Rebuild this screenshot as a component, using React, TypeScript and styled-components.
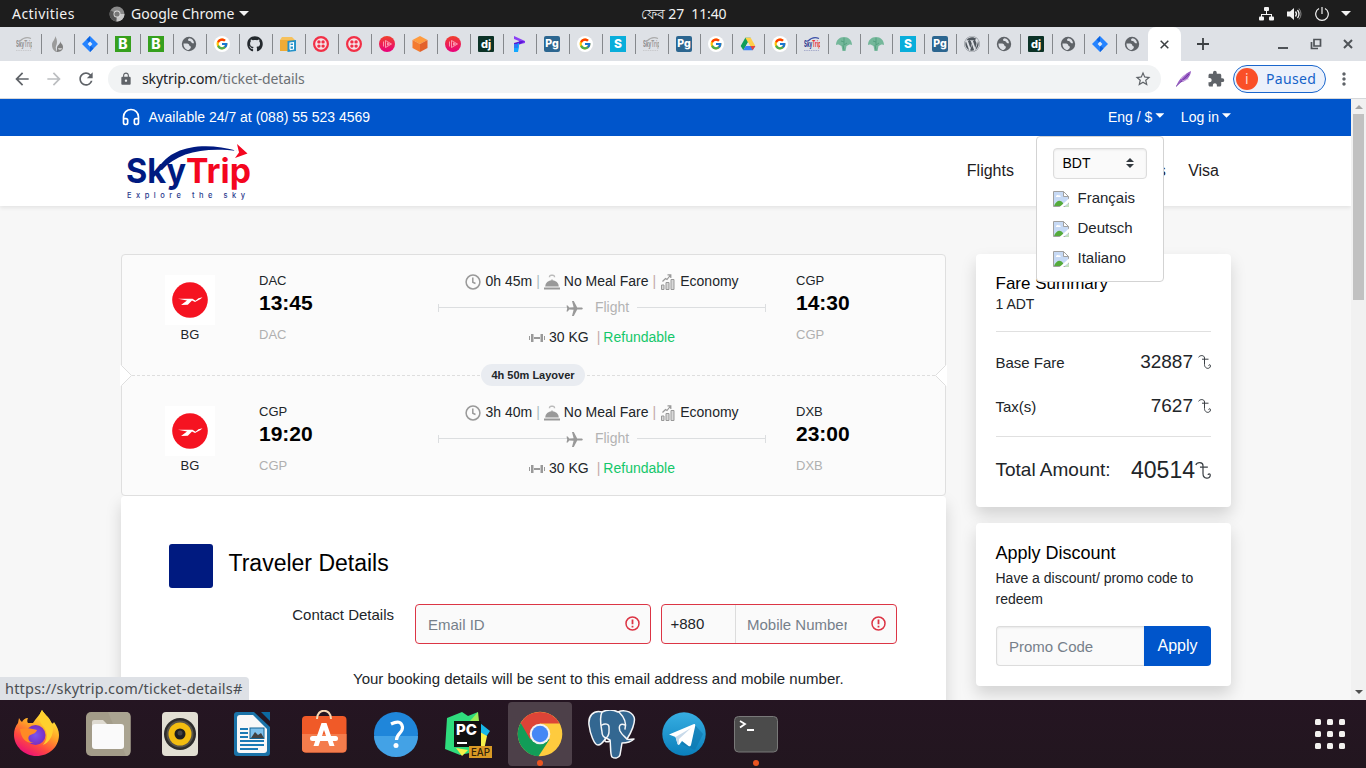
import React from 'react';
import styled, { createGlobalStyle, css } from 'styled-components';
import { Headphones } from 'lucide-react';
import { FcGoogle } from 'react-icons/fc';
import { FaGithub, FaWordpress } from 'react-icons/fa';
import {
  MdArrowBack, MdArrowForward, MdRefresh, MdLock, MdStarBorder, MdExtension, MdMoreVert,
} from 'react-icons/md';

const GlobalStyle = createGlobalStyle`
  * { box-sizing: border-box; }
  html, body { margin: 0; padding: 0; }
  body { width: 1366px; height: 768px; overflow: hidden; font-family: "Liberation Sans", Arial, sans-serif; color: #212529; }
  svg { display: block; flex: none; }
  text { font-family: Inter, "Noto Sans", sans-serif; }
  input { font-family: "Liberation Sans", Arial, sans-serif; }
`;

const ui = css`font-family: "Noto Sans", "Open Sans", sans-serif;`;

/* ---------- desktop ---------- */

const Desktop = styled.div`
  display: flex;
  flex-direction: column;
  width: 1366px;
  height: 768px;
  overflow: hidden;
  background: #231620;
`;

const TopBar = styled.header`
  ${ui}
  position: relative;
  flex: none;
  display: flex;
  align-items: center;
  height: 27px;
  padding: 0 15px 0 12px;
  background: #1d1d1d;
  color: #f2f2f2;
  font-size: 14px;
`;
const Activities = styled.span`width: 97px; font-size: 14px; letter-spacing: 0.45px;`;
const AppName = styled.span`margin-left: 6px;`;
const Clock = styled.span`
  position: absolute;
  left: 641px;
  top: 0;
  line-height: 27px;
  white-space: pre;
  font-size: 14px;
  letter-spacing: -0.1px;
`;
const Tray = styled.div`margin-left: auto; display: flex; align-items: center; gap: 12px;`;
const TinyCaret = styled.i<{ $gap?: number }>`
  margin-left: ${p => p.$gap ?? 0}px;
  border: 5px solid transparent;
  border-top-color: #f2f2f2;
  border-bottom: 0;
`;

/* ---------- browser ---------- */

const TabStrip = styled.div`
  flex: none;
  display: flex;
  height: 34px;
  padding-left: 9px;
  background: #dee1e6;
`;
const Tab = styled.div<{ $w: number; $last?: boolean }>`
  display: flex;
  align-items: center;
  width: ${p => p.$w}px;
  height: 20px;
  margin-top: 7px;
  padding-left: 7px;
  border-right: ${p => (p.$last ? 0 : 1)}px solid #85888c;
`;
const ActiveTab = styled.div`
  display: flex;
  align-items: center;
  justify-content: center;
  width: 33px;
  margin-left: -1px;
  background: #fff;
  border-radius: 8px 8px 0 0;
`;
const StripTools = styled.div`
  flex: 1;
  display: flex;
  align-items: center;
  padding: 0 13px 0 16px;
  gap: 20px;
`;
const WindowButtons = styled.div`display: flex; align-items: center; gap: 21px; margin-left: auto;`;
const Spacer = styled.div`flex: 1;`;

const Toolbar = styled.div`
  ${ui}
  flex: none;
  display: flex;
  align-items: center;
  height: 38px;
  padding: 0 12px 2px 12px;
  background: #fff;
  border-bottom: 1px solid #d5d7da;
  color: #5f6368;
`;
const NavButtons = styled.div`display: flex; gap: 12px; width: 96px;`;
const AddressBar = styled.div`
  display: flex;
  align-items: center;
  width: 1053px;
  height: 28px;
  padding: 0 9px 0 11px;
  border-radius: 14px;
  background: #f1f3f4;
`;
const Url = styled.span`
  flex: 1;
  margin-left: 9px;
  font-size: 14px;
  letter-spacing: -0.1px;
  color: #6c7074;
  b { font-weight: 400; color: #202124; }
`;
const Extensions = styled.div`display: flex; align-items: center; gap: 15px; margin-left: 15px;`;
const ProfileChip = styled.div`
  display: flex;
  align-items: center;
  gap: 8px;
  width: 93px;
  height: 28px;
  margin-left: 8px;
  padding-left: 2px;
  border: 1px solid #1a66cc;
  border-radius: 14px;
  background: #ecf1fb;
  color: #1462c9;
  font-size: 14px;
  letter-spacing: 0.35px;
`;
const Avatar = styled.span`
  width: 22px;
  height: 22px;
  border-radius: 50%;
  background: #fa4f28;
  color: #ffd9cf;
  text-align: center;
  line-height: 21px;
  font-size: 14px;
`;

const Viewport = styled.div`
  position: relative;
  flex: none;
  display: flex;
  height: 601px;
  overflow: hidden;
`;
const Page = styled.div`
  position: relative;
  width: 1351px;
  height: 601px;
  overflow: hidden;
  background: #f7f7f7;
`;
const ScrollTrack = styled.div`
  display: flex;
  flex-direction: column;
  align-items: center;
  justify-content: space-between;
  width: 15px;
  background: #f1f1f1;
`;
const ScrollUp = styled.div`padding-top: 6px;`;
const ScrollDown = styled.div`padding-bottom: 6px;`;
const ScrollThumb = styled.div`width: 11px; height: 186px; background: #c1c1c1; margin: 4px 0 auto;`;
const StatusBubble = styled.div`
  ${ui}
  position: absolute;
  left: 0;
  bottom: 0;
  width: 249px;
  height: 23px;
  padding-left: 5px;
  line-height: 22px;
  border-radius: 0 4px 0 0;
  background: #dee1e6;
  color: #4a4d51;
  font-size: 14.5px;
  letter-spacing: 0.2px;
`;

/* ---------- site header ---------- */

const Container = styled.div`width: 1110px; margin: 0 auto 0 121px; display: flex;`;
const ContactBar = styled.div`
  background: #0055cb;
  color: #fff;
  font-size: 14px;
  ${Container} { height: 37px; align-items: center; padding-bottom: 1px; }
`;
const Phone = styled.span`margin-left: 7.5px; flex: 1;`;
const Toggle = styled.span`
  display: flex;
  align-items: center;
  margin-left: 16.5px;
  &::after {
    content: "";
    width: 9px;
    height: 4.5px;
    margin: -3px 0 0 3px;
    background: #fff;
    clip-path: polygon(0 0, 100% 0, 50% 100%);
  }
`;
const SiteHeader = styled.div`
  position: relative;
  background: #fff;
  box-shadow: 0 2px 4px rgba(0, 0, 0, 0.08);
  ${Container} { height: 70px; align-items: center; justify-content: space-between; }
`;
const LogoWrap = styled.div`padding: 2px 0 0 5px;`;
const SiteNav = styled.nav`
  display: flex;
  gap: 22.5px;
  padding: 0 12px 1px 0;
  font-size: 16px;
  color: #1e2022;
`;

const LocaleMenu = styled.div`
  position: absolute;
  z-index: 2;
  left: 1036px;
  top: 37px;
  width: 128px;
  height: 146px;
  padding: 11px 16px;
  border: 1px solid #d3d3d3;
  border-radius: 4px;
  background: #fff;
`;
const CurrencySelect = styled.div`
  display: flex;
  align-items: center;
  justify-content: space-between;
  width: 94px;
  height: 31px;
  margin-bottom: 4px;
  padding: 0 12px 1px 8.5px;
  border: 1px solid #dcdcdc;
  border-radius: 4px;
  background: #fafafa;
  box-shadow: inset 0 1px 2px rgba(0, 0, 0, 0.075);
  font-size: 14px;
  color: #000;
`;
const Language = styled.div`
  display: flex;
  align-items: center;
  gap: 8.5px;
  height: 30px;
  padding-bottom: 1px;
  font-size: 15px;
  svg { margin-top: 2px; }
`;

/* ---------- content ---------- */

const Content = styled(Container)`padding-top: 48px; gap: 30px; align-items: flex-start;`;
const MainColumn = styled.div`width: 825px;`;
const SideColumn = styled.div`width: 255px; display: flex; flex-direction: column; gap: 16px;`;

const Itinerary = styled.section`
  position: relative;
  height: 242px;
  border: 1px solid #dfdfdf;
  border-radius: 4px;
  background: #fbfbfb;
`;
const Segment = styled.div<{ $second?: boolean }>`
  display: grid;
  grid-template-columns: 50px 223px 328px 1fr;
  height: 120px;
  padding: ${p => (p.$second ? 30 : 20)}px 0 0 43px;
`;
const Carrier = styled.div`font-size: 13px; text-align: center; line-height: 19px;`;
const Stop = styled.div<{ $pad: number }>`
  padding: 0 0 0 ${p => p.$pad}px;
  margin-top: -4px;
  font-size: 13px;
  line-height: 20px;
`;
const Time = styled.div`font-size: 21px; font-weight: 700; color: #000; line-height: 24px;`;
const Faded = styled.div`color: #b0b0b0; margin-top: 10px;`;
const Info = styled.div`display: flex; flex-direction: column; font-size: 14px; margin-top: -4px;`;
const InfoRow = styled.div<{ $h: number }>`
  display: flex;
  align-items: center;
  justify-content: center;
  height: ${p => p.$h}px;
  gap: 4px;
  svg { margin-top: 1px; }
`;
const Pipe = styled.span<{ $l?: number; $warm?: boolean }>`
  margin-left: ${p => p.$l ?? 0}px;
  color: ${p => (p.$warm ? '#c4a9a9' : '#a9bcc0')};
`;
const Good = styled.span`color: #14c76a; margin-left: -1px;`;
const Rail = styled.div`flex: 1; display: flex; align-items: center; height: 9px; margin-top: 1px;`;
const RailLine = styled.i`flex: 1; height: 1px; background: #dcdee0;`;
const RailEnd = styled.i`width: 1px; height: 8px; background: #dcdee0;`;
const RailLabel = styled.span`color: #b3b3b3; padding: 0 4px 0 8px;`;

const LayoverLine = styled.div`
  position: relative;
  height: 1px;
  background: repeating-linear-gradient(90deg, #dedede 0 3px, transparent 3px 5px);
`;
const LayoverPill = styled.span`
  position: absolute;
  left: 359px;
  top: -11px;
  width: 104px;
  height: 22px;
  border-radius: 11px;
  background: #e9ecf1;
  text-align: center;
  line-height: 22px;
  font-size: 11px;
  font-weight: 700;
`;
const Notch = styled.svg<{ $right?: boolean }>`
  position: absolute;
  top: -10px;
  ${p => (p.$right ? 'right: -2px; transform: scaleX(-1);' : 'left: -2px;')}
`;

const cardShadow = css`box-shadow: 0 8px 16px rgba(0, 0, 0, 0.15);`;

const TravelerCard = styled.section`
  ${cardShadow}
  height: 260px;
  padding: 48px 49px 0 48px;
  border-radius: 4px;
  background: #fff;
`;
const CardHead = styled.div`display: flex; gap: 15.5px; height: 60px;`;
const NavySquare = styled.div`width: 44px; height: 44px; border-radius: 3px; background: #001a80;`;
const CardTitle = styled.h2`margin: 0; font-weight: 400; font-size: 23px; line-height: 38px; color: #000;`;
const FormRow = styled.div`display: flex; gap: 10px; font-size: 15px;`;
const FormLabel = styled.label`flex: none; width: 225px; text-align: right; line-height: 22px; margin-right: 11px;`;
const InvalidField = styled.div`
  flex: none;
  display: flex;
  align-items: center;
  width: 236px;
  height: 40px;
  border: 1px solid #dc3545;
  border-radius: 4px;
  background: #fafafa;
  overflow: hidden;
  svg { margin: -2px 10px 0 auto; }
`;
const FieldInput = styled.input<{ $w: number }>`
  width: ${p => p.$w}px;
  height: 36px;
  padding: 1px 0 0;
  margin-left: 12px;
  border: 0;
  outline: 0;
  background: transparent;
  font-size: 15px;
  &::placeholder { color: #76808a; opacity: 1; }
`;
const DialCode = styled.span`
  flex: none;
  width: 74px;
  height: 40px;
  padding-left: 8.5px;
  margin-right: -1px;
  line-height: 40px;
  border-right: 1px solid #dcdcdc;
`;
const Note = styled.p`margin: 24px 0 0 184px; font-size: 15px; line-height: 22px; white-space: nowrap;`;

const SideCard = styled.section<{ $h: number }>`
  ${cardShadow}
  height: ${p => p.$h}px;
  padding: 18px 20px 0 19.5px;
  border-radius: 4px;
  background: #fff;
`;
const SideTitle = styled.h3<{ $size: number; $after: number }>`
  margin: 0 0 ${p => p.$after}px;
  font-weight: 400;
  font-size: ${p => p.$size}px;
  line-height: 24px;
  color: #000;
`;
const SideText = styled.div`font-size: 14px; line-height: 21px;`;
const Rule = styled.hr<{ $top: number; $bottom: number }>`
  margin: ${p => p.$top}px 0 ${p => p.$bottom}px;
  border: 0;
  border-top: 1px solid #e0e0e0;
`;
const FareRow = styled.div<{ $total?: boolean }>`
  display: flex;
  align-items: center;
  justify-content: space-between;
  height: 44px;
  padding-bottom: ${p => (p.$total ? 0 : 2)}px;
  font-size: ${p => (p.$total ? '19px' : '15px')};
`;
const Amount = styled.span<{ $size: number; $gap: number }>`
  display: flex;
  align-items: center;
  gap: ${p => p.$gap}px;
  font-size: ${p => p.$size}px;
  line-height: 28px;
`;
const PromoRow = styled.div`display: flex; margin: 16px 0 0 0.5px;`;
const PromoInput = styled.input`
  width: 148px;
  height: 40px;
  padding: 1px 12px 0;
  border: 1px solid #dcdcdc;
  border-right: 0;
  border-radius: 4px 0 0 4px;
  background: #fafafa;
  box-shadow: inset 0 1px 2px rgba(0, 0, 0, 0.075);
  font-size: 15px;
  &::placeholder { color: #76808a; opacity: 1; }
`;
const ApplyButton = styled.button`
  width: 67px;
  height: 40px;
  padding: 0 0 1px;
  border: 0;
  border-radius: 0 4px 4px 0;
  background: #0055cb;
  color: #fff;
  font: 16px "Liberation Sans", Arial, sans-serif;
`;

/* ---------- dock ---------- */

const Dock = styled.footer`
  flex: 1;
  display: flex;
  align-items: center;
  background: linear-gradient(#251522, #22161f);
  padding-right: 21px;
`;
const DockItem = styled.div<{ $active?: boolean }>`
  position: relative;
  display: flex;
  align-items: center;
  justify-content: center;
  width: 64px;
  height: 64px;
  margin: 0 4px;
  border-radius: 4px;
  background: ${p => (p.$active ? '#4d4049' : 'transparent')};
`;
const RunningDot = styled.i`
  position: absolute;
  left: 29px;
  bottom: 0;
  width: 6px;
  height: 6px;
  border-radius: 50%;
  background: #e95420;
`;
const AppGrid = styled.div`
  margin-left: auto;
  display: grid;
  grid-template-columns: repeat(3, 6px);
  gap: 6px;
  i { width: 6px; height: 6px; border-radius: 1.5px; background: #f3f1ef; }
`;

/* ---------- favicons ---------- */

const SkyFav = ({ color }: { color?: boolean }) => (
  <svg width="16" height="16" viewBox="0 0 16 16">
    <path d="M4 5 Q9 0 15 2.5" fill="none" stroke={color ? '#3c50a8' : '#aaa'} strokeWidth="1.2" />
    <text x="0" y="11" fontSize="4.500" fontWeight="700" fill={color ? '#27348b' : '#8d8d8d'} transform="translate(0 -11) scale(1 2)">
      Sky<tspan fill={color ? '#e8313a' : '#9b9b9b'}>Trip</tspan>
    </text>
    <path d="M0 14.5h15" stroke={color ? '#9aa0c4' : '#c4c4c6'} strokeWidth=".8" strokeDasharray="1.5 .8" />
  </svg>
);
const Flame = () => (
  <svg width="16" height="16" viewBox="0 0 16 16">
    <path d="M6 0C7 3 3 5 3 9c0 3 1 5 4 7 1-2-1-4 0-6S9 4 6 0z" fill="#9b9b9b" />
    <path d="M11 5c1 3-3 4-3 7 0 2 0 3-1 4 4 0 7-1 7-5 0-3-2-3-3-6z" fill="#808080" />
    <path d="M9 12a2 2 0 0 0 4 0" fill="#c8c8c8" />
  </svg>
);
const Diamond = () => (
  <svg width="16" height="16" viewBox="0 0 16 16">
    <path d="M8 0l8 8-8 8-8-8z" fill="#2684ff" />
    <path d="M8 0L4.500 3.500 8 7zM8 16l3.500-3.500L8 9z" fill="#0b63e0" />
    <path d="M8 5.600L10.400 8 8 10.400 5.600 8z" fill="#dee9f8" />
  </svg>
);
const LetterFav = ({ t, bg, size = 12, r = 0, y = 12 }: { t: string; bg: string; size?: number; r?: number; y?: number }) => (
  <svg width="16" height="16" viewBox="0 0 16 16">
    <rect width="16" height="16" rx={r} fill={bg} />
    <text x="8" y={y} fontSize={size} fontWeight="800" textAnchor="middle" fill="#fff">{t}</text>
  </svg>
);
const GoogleFav = () => (
  <svg width="16" height="16" viewBox="0 0 16 16">
    <circle cx="8" cy="8" r="8" fill="#fff" />
    <FcGoogle x="1.500" y="1.500" size={13} />
  </svg>
);
const BoxFav = () => (
  <svg width="16" height="16" viewBox="0 0 16 16">
    <path d="M2 1h10l3 3H0z" fill="#f6c15c" />
    <path d="M0 4h15v11H0z" fill="#eeab35" />
    <path d="M7.500 5l8.500-1v11l-8.500 1z" fill="#2391c9" />
    <path d="M10 13.500V7l3.500-.4v2.600l-3.500.6 3.500.2v3l-3.500.6" fill="none" stroke="#fff" strokeWidth="1.100" />
  </svg>
);
const Twilio = () => (
  <svg width="16" height="16" viewBox="0 0 16 16" fill="#f22f46">
    <circle cx="8" cy="8" r="6.900" fill="#f3e3e7" stroke="#f22f46" strokeWidth="2.200" />
    <circle cx="5.900" cy="5.900" r="1.700" /><circle cx="10.100" cy="5.900" r="1.700" />
    <circle cx="5.900" cy="10.100" r="1.700" /><circle cx="10.100" cy="10.100" r="1.700" />
  </svg>
);
const PinkFav = () => (
  <svg width="16" height="16" viewBox="0 0 16 16">
    <defs><linearGradient id="pk" x2="0" y2="1"><stop stopColor="#f0402c" /><stop offset="1" stopColor="#e9017c" /></linearGradient></defs>
    <circle cx="8" cy="8" r="8" fill="url(#pk)" />
    <path d="M4.500 5.500v5M6.500 4.500v7M6.500 4.500L12.500 8l-6 3.500M8.500 6.800v2.400l2-1.200z" fill="none" stroke="#ffb3c4" strokeWidth=".8" />
  </svg>
);
const CubeFav = () => (
  <svg width="16" height="16" viewBox="0 0 16 16">
    <path d="M8 0l7.500 4L8 8 .5 4z" fill="#ff9b3f" />
    <path d="M.5 4L8 8v8L.5 12z" fill="#f47b30" />
    <path d="M15.500 4L8 8v8l7.500-4z" fill="#e3622c" />
  </svg>
);
const PFav = () => (
  <svg width="16" height="16" viewBox="0 0 16 16">
    <path d="M3 0l11 5v2L8 8.500V5L3 3z" fill="#8a3ff5" />
    <path d="M14 5.500L3 11V7l7-2z" fill="#5a17d6" />
    <path d="M3 9l5-2v4l-1 5H3z" fill="#12a8ff" />
    <path d="M3 8h4v4H3z" fill="#2a7bf6" />
  </svg>
);
const DriveFav = () => (
  <svg width="16" height="16" viewBox="0 0 24 24">
    <path d="M8 2.500h8L8.500 15.500 5 21.500 1 15z" fill="#0f9d58" />
    <path d="M8 2.500h8l7 12.500h-8z" fill="#ffcf48" />
    <path d="M8.500 15H23l-4 6.500H5z" fill="#3b82f6" />
    <path d="M15.500 15H23l-4 6.500z" fill="#e8453c" />
    <path d="M12 9.500L15.200 15H8.800z" fill="#dee1e6" />
  </svg>
);
const TreeFav = () => (
  <svg width="16" height="16" viewBox="0 0 16 16">
    <path d="M0 9C0 4 3.500 1 8 1s8 3 8 8c-1.500-1-3.500-.5-5.500 1L9.500 15h-3L5.500 10C3.500 8.500 1.500 8 0 9z" fill="#74b79a" />
    <path d="M8 2v4L5 5M8 6v3l3-2M7 9l1 5" stroke="#4c9a78" strokeWidth=".8" fill="none" />
  </svg>
);
const Globe = () => (
  <svg width="16" height="16" viewBox="0 0 16 16">
    <circle cx="8" cy="8" r="7.200" fill="#5f6368" />
    <path d="M2.500 7.500c2 0 4-.2 5 .5 1.200.8.500 2 1.800 2.200 1 .2.700 1.600-.4 2.800l-1.400 1C5 14 2.300 11.500 2.500 7.500z" fill="#dee1e6" />
    <path d="M8.500 2.300c-1.500.7-2 1.700-1 2.500s2.500.2 2.700 1.200c.3 1.200 1.500 1.300 2.800 1.200C12.800 4.500 11 2.600 8.500 2.300z" fill="#dee1e6" />
  </svg>
);

const B = () => <LetterFav t="B" bg="#36a01e" size={14} y={13} />;
const DJ = () => <LetterFav t="dj" bg="#0c3226" size={11} y={11.5} r={1} />;
const PG = () => <LetterFav t="Pg" bg="#2c6690" size={10.5} y={11} r={2} />;
const S = () => <LetterFav t="S" bg="#09aedb" size={12} y={12.3} />;

const tabs: React.FC[] = [
  () => <SkyFav />, Flame, Diamond, B, B, Globe, GoogleFav, () => <FaGithub size={16} color="#24292e" />, BoxFav,
  Twilio, Twilio, PinkFav, CubeFav, PinkFav, DJ, PFav, PG, GoogleFav, S, () => <SkyFav />, PG, GoogleFav, DriveFav,
  GoogleFav, () => <SkyFav color />, TreeFav, TreeFav, S, PG, () => <FaWordpress size={16} color="#50575e" />,
  Globe, DJ, Globe, Diamond, Globe,
];

/* ---------- site drawings ---------- */

const SkyTripLogo = () => (
  <svg width="128" height="60" viewBox="0 0 128 60">
    <text x="0" y="41" fontSize="34" fontWeight="700" fill="#001a80" textLength="60" lengthAdjust="spacingAndGlyphs">Sky</text>
    <text x="60" y="41" fontSize="34" fontWeight="700" fill="#f4061f" textLength="65" lengthAdjust="spacingAndGlyphs">Trip</text>
    <path d="M32 27C44 5 76-1 112 9 78 5 52 10 36 28z" fill="#001a80" />
    <path d="M111 2l10.500 9.500L109 16l4-5.500z" fill="#f4061f" />
    <path d="M107 6.500l6 3-4 .6z" fill="#fff" />
    <text x="1" y="55.500" fontSize="7.500" fontWeight="500" fill="#2a3a8c" textLength="122" letterSpacing="4">Explore the sky</text>
  </svg>
);

const BrokenImage = () => (
  <svg width="16" height="16" viewBox="0 0 16 16">
    <path d="M.5.5h10l5 5v10H.5z" fill="#c6d9f5" stroke="#a0a0a0" />
    <path d="M10.500.5v5h5z" fill="#fff" stroke="#a0a0a0" />
    <path d="M3 6c0-2 2-2.500 2.500-1.500C7 4 8 5 7.500 6z" fill="#fff" />
    <path d="M1 15c2-5 6-7 9-3l1 3z" fill="#55ab3c" />
    <path d="M16 7.500L6.500 16H10l6-4.500z" fill="#fff" />
    <path d="M11.500 16l4.500-4v4z" fill="#c6e0bd" />
  </svg>
);

const BimanLogo = () => (
  <svg width="50" height="50" viewBox="0 0 50 50">
    <rect width="50" height="50" fill="#fff" />
    <circle cx="25" cy="25" r="17.800" fill="#f51321" />
    <path d="M13 23.700h14.500l3 2 3-2.500 4-.9-2 1.800-5.500 2.900-3-1.500-4.200 4.200-6.800.3 6-4.500z" fill="#fff" />
  </svg>
);

const grey = '#999';
const DurationIcon = () => (
  <svg width="16" height="16" viewBox="0 0 16 16" fill="none" stroke={grey} strokeWidth="1.500">
    <circle cx="8" cy="8" r="6.900" /><path d="M7.800 3.500V8.300L10.500 9.500" />
  </svg>
);
const MealIcon = () => (
  <svg width="16" height="16" viewBox="0 0 16 16" fill={grey}>
    <path d="M1.200 12.500a6.800 6.300 0 0 1 13.600 0z" /><rect y="13.500" width="16" height="2" />
    <path d="M6.500 6.500q1.500-2 3 0z" />
    <path d="M5.500 3.200Q5.500.7 8 1.300 10.500.7 10.500 3.200" fill="none" stroke="#bbb" strokeWidth="1.500" />
  </svg>
);
const CabinIcon = () => (
  <svg width="16" height="16" viewBox="0 0 16 16" fill="#d8d8d8" stroke={grey}>
    <path d="M1.500 11h2.500v4.500H1.500zM6 8.500h3v7H6zM11 5.500h3v10h-3z" />
    <path d="M2.500 7.500l3-3 1.500 1L10.500 1M7.500.8h3.300v3.200" fill="none" strokeWidth="1.200" />
  </svg>
);
const BaggageIcon = () => (
  <svg width="16" height="16" viewBox="0 0 16 16" fill={grey}>
    <path d="M0 6h1v4H0zM2 4h2.500v8H2zM5 7h6v2H5zM11.500 4H14v8h-2.500zM15 6h1v4h-1z" />
  </svg>
);
const PlaneIcon = () => (
  <svg width="17" height="17" viewBox="0 0 17 17" fill={grey}>
    <path d="M16.800 8.500c0 .7-.8 1.100-1.600 1.100h-4L7.800 16H6l1.600-6.300-4.400-.2L1.800 11.500H.5l.7-3-.7-3h1.300l1.400 2 4.400-.2L6 1h1.800l3.400 6.400h4c.8 0 1.600.4 1.600 1.100z" />
  </svg>
);
const AlertIcon = () => (
  <svg width="15" height="15" viewBox="0 0 15 15" fill="none" stroke="#dc3545" strokeWidth="1.500">
    <circle cx="7.500" cy="7.500" r="6.500" /><path d="M7.500 3.500v4.700M7.500 9.700v1.800" strokeWidth="1.800" />
  </svg>
);
const Taka = ({ h }: { h: number }) => (
  <svg width={h - 1} height={h} viewBox="0 0 13 14" fill="none" stroke="#3a3f44" strokeWidth="1">
    <path d="M.6 2.400C1.500 0 6.500-.2 6.500 3v6.500c0 4.800 6 5 6 1.200 0-1.300-1.800-1.300-1.800 0M4 4.200h6.500" />
  </svg>
);

/* ---------- dock drawings ---------- */

const Firefox = () => (
  <svg width="48" height="48" viewBox="0 0 48 48">
    <defs>
      <linearGradient id="ff" x1=".8" y1=".1" x2=".3" y2="1"><stop stopColor="#fff03a" /><stop offset=".4" stopColor="#ffa027" /><stop offset=".7" stopColor="#ff4a3f" /><stop offset="1" stopColor="#ea0d7a" /></linearGradient>
      <radialGradient id="fp"><stop stopColor="#7a54ee" /><stop offset="1" stopColor="#7a2fc0" /></radialGradient>
    </defs>
    <path d="M30 0c2 4 7 7 9 12 1 2 2 2 3 0 3 4 5 9 5 13 0 12-10 21-22.500 21S2 36 2 25c0-5 1-8 4-12l1-5c1 2 2 3 3 4 1-2 3-4 6-4-1 2-1 4 0 5h5c3-5 7-8 9-13z" fill="url(#ff)" />
    <circle cx="23.500" cy="25" r="10" fill="url(#fp)" />
    <path d="M8 19c4-1 10-1 17 1-1 4-6 4-8 6-2 3 1 7 5 7-8 1-13-5-14-14z" fill="#ff8a25" />
    <path d="M30 0c-3 5-4 9 0 15 5 5 7 13 1 20 8-3 13-15 8-23-2-5-7-8-9-12z" fill="#ffd12e" />
  </svg>
);
const Files = () => (
  <svg width="48" height="48" viewBox="0 0 48 48">
    <rect x="2" y="2" width="44.500" height="44" rx="5" fill="#a39c89" />
    <path d="M24 2h18q4.500 0 4.500 4.500V41q0 5-4.500 5z" fill="#aaa491" />
    <path d="M8 12q0-2 2-2h9l4 4h7v10H8z" fill="#dedad0" />
    <rect x="8" y="14" width="32" height="25" rx="3" fill="#fafafa" />
  </svg>
);
const Rhythmbox = () => (
  <svg width="48" height="48" viewBox="0 0 48 48">
    <rect x="6" y="2" width="36" height="44" rx="4" fill="#e2dfd3" />
    <circle cx="24" cy="24" r="16" fill="#2e2d2c" /><circle cx="24" cy="24" r="13.500" fill="#57534a" />
    <circle cx="24" cy="24" r="11.500" fill="#f3bd10" /><circle cx="24" cy="24" r="5.500" fill="#1e1f20" /><circle cx="24" cy="23" r="2.500" fill="#444" />
  </svg>
);
const Writer = () => (
  <svg width="48" height="48" viewBox="0 0 48 48">
    <path d="M6 5q0-3 3-3h17l16 15v26q0 3-3 3H9q-3 0-3-3z" fill="#1a73a8" />
    <path d="M9 8q0-3 3-3h13l14 14v21q0 3-3 3H12q-3 0-3-3z" fill="#f8f8f8" />
    <path d="M33 2h9v9z" fill="#0c69a0" />
    <path d="M12 19h8M12 23h8M12 27h8M12 31h24M12 35h24M12 39h18" stroke="#1a7ab5" strokeWidth="2" />
    <rect x="22" y="18" width="14" height="10.500" fill="#7dc0ec" stroke="#146494" />
    <path d="M23 28l4-6 3 3 3-2 3 5z" fill="#424242" />
  </svg>
);
const Software = () => (
  <svg width="48" height="48" viewBox="0 0 48 48">
    <rect x="2" y="6" width="44.500" height="36.500" rx="4" fill="#f05a28" />
    <path d="M2 24h44.500v14.500q0 4-4 4H6q-4 0-4-4z" fill="#f47c4c" />
    <path d="M17 9c0-11 14-11 14 0" fill="none" stroke="#f8d9b5" strokeWidth="2" />
    <path d="M21.500 13h5l8 23h-5L24 20l-5.500 16h-5z" fill="#fff" />
    <rect x="10" y="26" width="28" height="5" rx="2.500" fill="#fff" />
  </svg>
);
const Help = () => (
  <svg width="48" height="48" viewBox="0 0 48 48">
    <circle cx="24" cy="24" r="22" fill="#1f86da" /><path d="M2 26h44a22 21 0 0 1-44 0z" fill="#43a2e6" />
    <path d="M19 14q10-5 11.500 3c.5 6-6 6-6 13" fill="none" stroke="#fff" strokeWidth="3.200" /><circle cx="24" cy="35.500" r="2.500" fill="#fff" />
  </svg>
);
const PyCharm = () => (
  <svg width="48" height="48" viewBox="0 0 48 48">
    <path d="M3 8L18 2l6 4 10-4v10l-4 30-14 3L1 39z" fill="#2fdc7d" />
    <path d="M34 2l-8 9h9z" fill="#9dee58" />
    <path d="M36 13l10 8-6 9-4 2z" fill="#16b8e8" />
    <path d="M36 22l7 4-3 14-8-2zM12 38l6 8 6-6z" fill="#f4f04a" />
    <rect x="10" y="11" width="27" height="26" fill="#111" />
    <text x="12" y="25" fontSize="15" fontWeight="800" fill="#fff" textLength="21" lengthAdjust="spacingAndGlyphs">PC</text>
    <rect x="13" y="32" width="10" height="2" fill="#fff" />
    <rect x="25" y="36" width="23" height="12" fill="#d99a25" />
    <text x="27" y="46" fontSize="10.500" fontWeight="500" fill="#30210a" textLength="19" lengthAdjust="spacingAndGlyphs">EAP</text>
  </svg>
);
const Chrome = () => (
  <svg width="48" height="48" viewBox="0 0 48 48">
    <circle cx="24" cy="24" r="22.300" fill="#fecb3e" />
    <path d="M24 24L4.700 12.900A22.300 22.300 0 0 0 22.500 46.250L33.500 29.500z" fill="#129d58" />
    <path d="M24 24L14.300 29.500 4.700 12.900A22.300 22.300 0 0 1 43.500 13.500H24z" fill="#dd4437" />
    <circle cx="24" cy="24" r="10.300" fill="#f2f2f2" /><circle cx="24" cy="24" r="8.200" fill="#4487f5" />
  </svg>
);
const Postgres = () => (
  <svg width="48" height="49" viewBox="0 0 48 49" stroke="#f4f6f8" strokeWidth="1.500" strokeLinejoin="round" strokeLinecap="round">
    <path d="M14 2C5 0 0 6 1 15c1 8 5 20 9 20 3 0 6-4 8-7l4 2c1 7 0 14 2 17 3 2 7 1 8-2l2-12c4 0 9-1 12-4-3 0-5 1-7 0 4-6 9-17 7-22-3-7-12-7-16-5-6-3-12-2-16 0z" fill="#336791" />
    <path d="M14 2c-3 6-1 14 0 20M31 2c4 4 8 10 6 17M14 15c3-2 7-1 7 2 0 4 1 9-3 11-3-1-4-3-4-6M37 15c-4-2-7 0-5 6 2 4 4 5 7 8M18 28c-3 3 0 5 4 3" fill="none" />
  </svg>
);
const Telegram = () => (
  <svg width="48" height="48" viewBox="0 0 48 48">
    <defs><linearGradient id="tg" x2="0" y2="1"><stop stopColor="#37aee2" /><stop offset="1" stopColor="#0a7fbb" /></linearGradient></defs>
    <circle cx="24" cy="24" r="21.700" fill="url(#tg)" />
    <path d="M34 14l9 10-8 16-14-6z" fill="#0f76ad" opacity=".6" />
    <path d="M9 24.500l25-10.500c1 0 1.500.5 1.200 2L31 35c-.5 1.500-1.500 1.500-2.500 1L22 31l-3 4c-1 0-1.500-1-1.700-2L15.500 27z" fill="#fff" />
    <path d="M15.500 27L31 18 19 29l-.5 6c-1-1-1.200-2-1.500-3z" fill="#c8daea" />
  </svg>
);
const Terminal = () => (
  <svg width="48" height="48" viewBox="0 0 48 48">
    <rect x="2.500" y="6.500" width="43" height="35.500" rx="4" fill="#4b4b4b" stroke="#797979" />
    <path d="M8 11l5 3-5 3.500M15 20h7" fill="none" stroke="#fff" strokeWidth="1.800" />
  </svg>
);

const apps: { icon: React.FC; active?: boolean; running?: boolean }[] = [
  { icon: Firefox }, { icon: Files }, { icon: Rhythmbox }, { icon: Writer }, { icon: Software }, { icon: Help },
  { icon: PyCharm }, { icon: Chrome, active: true, running: true }, { icon: Postgres }, { icon: Telegram },
  { icon: Terminal, running: true },
];

interface Leg { from: string; dep: string; to: string; arr: string; duration: string; }

const FlightSegment = ({ leg, second }: { leg: Leg; second?: boolean }) => (
  <Segment $second={second}>
    <Carrier><BimanLogo />BG</Carrier>
    <Stop $pad={44}>{leg.from}<Time>{leg.dep}</Time><Faded>{leg.from}</Faded></Stop>
    <Info>
      <InfoRow $h={20}>
        <DurationIcon /><span>{leg.duration}</span><Pipe>|</Pipe>
        <MealIcon /><span>No Meal Fare</span><Pipe $warm>|</Pipe>
        <CabinIcon /><span>Economy</span>
      </InfoRow>
      <InfoRow $h={32}>
        <Rail><RailEnd /><RailLine /></Rail>
        <Rail style={{ flex: 'none', marginLeft: -5 }}><PlaneIcon /></Rail>
        <RailLabel>Flight</RailLabel>
        <Rail><RailLine /><RailEnd /></Rail>
      </InfoRow>
      <InfoRow $h={28}>
        <BaggageIcon /><span>30 KG</span><Pipe $l={4} $warm>|</Pipe><Good>Refundable</Good>
      </InfoRow>
    </Info>
    <Stop $pad={30}>{leg.to}<Time>{leg.arr}</Time><Faded>{leg.to}</Faded></Stop>
  </Segment>
);

const NotchShape = ({ right }: { right?: boolean }) => (
  <Notch $right={right} width="13" height="21" viewBox="0 0 13 21">
    <path d="M0 0h1l10.500 10.500L1 21H0z" fill="#fff" />
    <path d="M1.500.5l10 10-10 10" fill="none" stroke="#dfdfdf" />
  </Notch>
);

export default function App() {
  return (
    <Desktop>
      <GlobalStyle />
      <TopBar>
        <Activities>Activities</Activities>
        <svg width="16" height="16" viewBox="0 0 16 16">
          <circle cx="8" cy="8" r="7.500" fill="#8a8a8a" />
          <path d="M8 8L1.500 4.200A7.500 7.500 0 0 0 7.500 15.500z" fill="#555" /><path d="M8 8h7.500a7.500 7.500 0 0 1-8 7.500z" fill="#c8c8c8" />
          <circle cx="8" cy="8" r="3.500" fill="#ddd" /><circle cx="8" cy="8" r="2.600" fill="#777" />
        </svg>
        <AppName>Google Chrome</AppName>
        <TinyCaret $gap={5} />
        <Clock>{'ফেব 27  11:40'}</Clock>
        <Tray>
          <svg width="16" height="14" viewBox="0 0 16 14" fill="#f2f2f2">
            <rect x="5" width="5" height="4" rx="1" /><rect y="9.500" width="5" height="4" rx="1" /><rect x="10" y="9.500" width="5" height="4" rx="1" />
            <path d="M7 4h1v3h5v3h-1V8H3v2H2V7h5z" />
          </svg>
          <svg width="16" height="14" viewBox="0 0 16 14" fill="none" stroke="#f2f2f2">
            <path d="M0 4.500h3L7 1v12L3 9.500H0z" fill="#f2f2f2" stroke="none" /><path d="M8.500 4.500q2 2.500 0 5M10.500 3q3 4 0 8" strokeWidth="1.300" /><path d="M12 1.500q4 5.500 0 11" stroke="#888" />
          </svg>
          <svg width="14" height="14" viewBox="0 0 14 14" fill="none" stroke="#f2f2f2" strokeWidth="1.200">
            <path d="M4 1.500a6.300 6.300 0 1 0 6 0M7 0v7" />
          </svg>
          <TinyCaret />
        </Tray>
      </TopBar>

      <TabStrip>
        {tabs.map((Fav, i) => (
          <Tab key={i} $w={i < 20 ? 33 : 32} $last={i === tabs.length - 1}><Fav /></Tab>
        ))}
        <ActiveTab>
          <svg width="9" height="9" viewBox="0 0 9 9" stroke="#3c4043" strokeWidth="1.500"><path d="M.7.700l7.600 7.600M8.300.700L.7 8.300" /></svg>
        </ActiveTab>
        <StripTools>
          <svg width="12" height="12" viewBox="0 0 12 12" stroke="#3c4043" strokeWidth="1.800"><path d="M6 0v12M0 6h12" /></svg>
          <WindowButtons>
            <svg width="12" height="12" viewBox="0 0 12 12"><path d="M1 9h10v2H1z" fill="#4f5358" /></svg>
            <svg width="12" height="12" viewBox="0 0 12 12" fill="none" stroke="#4f5358" strokeWidth="1.700"><path d="M4 1.500h6.500V8H4z" /><path d="M1.500 4v6.500H8" /></svg>
            <svg width="10" height="10" viewBox="0 0 10 10" stroke="#4f5358" strokeWidth="2"><path d="M1 1l8 8M9 1L1 9" /></svg>
          </WindowButtons>
        </StripTools>
      </TabStrip>

      <Toolbar>
        <NavButtons>
          <MdArrowBack size={20} /><MdArrowForward size={20} color="#bcbec1" /><MdRefresh size={20} />
        </NavButtons>
        <AddressBar>
          <MdLock size={14} />
          <Url><b>skytrip.com</b>/ticket-details</Url>
          <MdStarBorder size={18} />
        </AddressBar>
        <Extensions>
          <svg width="16" height="16" viewBox="0 0 16 16">
            <path d="M0 15.500C3 8 8 3 15 0c-.5 6-5 10.500-11 11.500z" fill="#9a5fc4" />
            <path d="M0 15.500L13 3" stroke="#6b2fa0" strokeWidth=".9" /><path d="M6 10l7-2M5 8l5-5" stroke="#d9c1ea" strokeWidth=".7" />
          </svg>
          <MdExtension size={18} />
        </Extensions>
        <ProfileChip><Avatar>i</Avatar>Paused</ProfileChip>
        <Spacer />
        <MdMoreVert size={20} />
      </Toolbar>

      <Viewport>
        <Page>
          <ContactBar>
            <Container>
              <Headphones size={20} strokeWidth={2} />
              <Phone>Available 24/7 at (088) 55 523 4569</Phone>
              <Toggle>Eng / $</Toggle>
              <Toggle>Log in</Toggle>
            </Container>
          </ContactBar>
          <SiteHeader>
            <Container>
              <LogoWrap><SkyTripLogo /></LogoWrap>
              <SiteNav><span>Flights</span><span>Hotels</span><span>Holidays</span><span>Visa</span></SiteNav>
            </Container>
          </SiteHeader>

          <Content>
            <MainColumn>
              <Itinerary>
                <FlightSegment leg={{ from: 'DAC', dep: '13:45', to: 'CGP', arr: '14:30', duration: '0h 45m' }} />
                <LayoverLine>
                  <NotchShape /><LayoverPill>4h 50m Layover</LayoverPill><NotchShape right />
                </LayoverLine>
                <FlightSegment second leg={{ from: 'CGP', dep: '19:20', to: 'DXB', arr: '23:00', duration: '3h 40m' }} />
              </Itinerary>
              <TravelerCard>
                <CardHead><NavySquare /><CardTitle>Traveler Details</CardTitle></CardHead>
                <FormRow>
                  <FormLabel>Contact Details</FormLabel>
                  <InvalidField><FieldInput $w={180} placeholder="Email ID" /><AlertIcon /></InvalidField>
                  <InvalidField>
                    <DialCode>+880</DialCode><FieldInput $w={100} placeholder="Mobile Number" /><AlertIcon />
                  </InvalidField>
                </FormRow>
                <Note>Your booking details will be sent to this email address and mobile number.</Note>
              </TravelerCard>
            </MainColumn>

            <SideColumn>
              <SideCard $h={253}>
                <SideTitle $size={17} $after={-2}>Fare Summary</SideTitle>
                <SideText>1 ADT</SideText>
                <Rule $top={16} $bottom={9} />
                <FareRow>Base Fare<Amount $size={19} $gap={5}>32887<Taka h={14} /></Amount></FareRow>
                <FareRow>Tax(s)<Amount $size={19} $gap={5}>7627<Taka h={14} /></Amount></FareRow>
                <Rule $top={7} $bottom={11} />
                <FareRow $total>Total Amount:<Amount $size={23} $gap={0}>40514<Taka h={17} /></Amount></FareRow>
              </SideCard>
              <SideCard $h={163}>
                <SideTitle $size={18} $after={3}>Apply Discount</SideTitle>
                <SideText>Have a discount/ promo code to redeem</SideText>
                <PromoRow><PromoInput placeholder="Promo Code" /><ApplyButton>Apply</ApplyButton></PromoRow>
              </SideCard>
            </SideColumn>
          </Content>

          <LocaleMenu>
            <CurrencySelect>
              BDT
              <svg width="8" height="10" viewBox="0 0 8 10" fill="#343a40"><path d="M4 0l4 4H0zM4 10L0 6h8z" /></svg>
            </CurrencySelect>
            {['Français', 'Deutsch', 'Italiano'].map(l => <Language key={l}><BrokenImage />{l}</Language>)}
          </LocaleMenu>
          <StatusBubble>https://skytrip.com/ticket-details#</StatusBubble>
        </Page>
        <ScrollTrack>
          <ScrollUp><svg width="8" height="5" viewBox="0 0 8 5"><path d="M4 0l4 4H0z" fill="#a3a3a3" /></svg></ScrollUp>
          <ScrollThumb />
          <ScrollDown><svg width="8" height="4" viewBox="0 0 8 4"><path d="M4 4l4-4H0z" fill="#505050" /></svg></ScrollDown>
        </ScrollTrack>
      </Viewport>

      <Dock>
        {apps.map(({ icon: Icon, active, running }, i) => (
          <DockItem key={i} $active={active}><Icon />{running && <RunningDot />}</DockItem>
        ))}
        <AppGrid>{Array.from({ length: 9 }, (_, i) => <i key={i} />)}</AppGrid>
      </Dock>
    </Desktop>
  );
}
